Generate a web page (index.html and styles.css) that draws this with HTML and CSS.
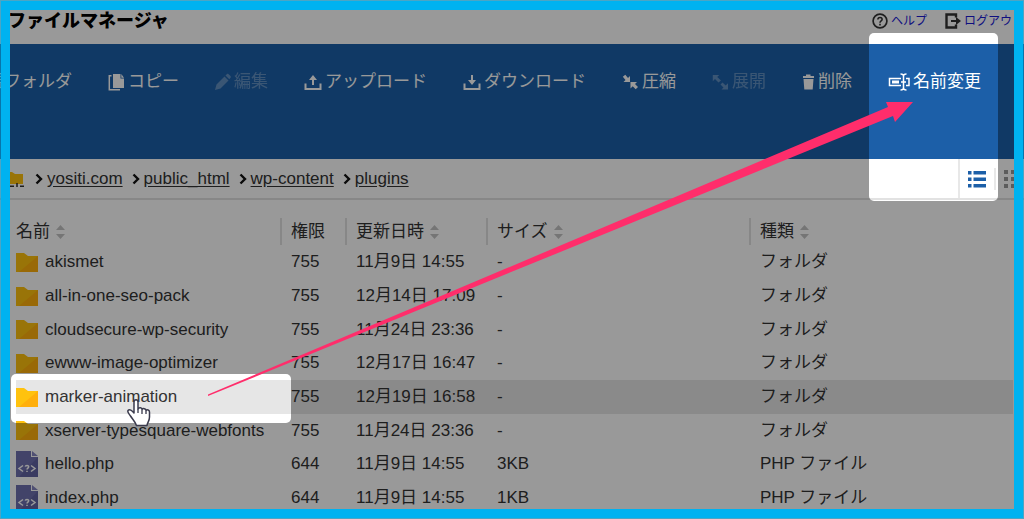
FILE: index.html
```html
<!DOCTYPE html>
<html lang="ja">
<head>
<meta charset="utf-8">
<meta name="viewport" content="width=device-width, initial-scale=1">
<title>ファイルマネージャ</title>
<link rel="stylesheet" href="styles.css">
</head>
<body>
<svg class="defs" width="0" height="0" aria-hidden="true">
  <symbol id="folder" viewBox="0 0 22 19">
    <path fill="#ffc20e" d="M0 0h8l4 3h10v16H0z"/>
    <path fill="#ffaf0c" d="M22 3v16H3z"/>
  </symbol>
  <symbol id="php" viewBox="0 0 22 26">
    <path fill="#6f70b0" d="M0 0h15v6h7v20H0z"/>
    <path fill="#6263a2" d="M22 6v20H3z"/>
    <path fill="#8586c0" d="M16 0l6 5h-6z"/>
    <path fill="none" stroke="#fff" stroke-width="1.500" d="M7 14.500l-4 3 4 3M15 14.500l4 3-4 3M9.300 15.600c.2-1.600 3.500-1.600 3.400.2 0 1.200-1.700 1.300-1.700 2.600M11 19.700v1.300"/>
  </symbol>
  <symbol id="sort" viewBox="0 0 9 14">
    <path fill="#c4c4c4" d="M0 5l4.500-5L9 5zM0 9h9l-4.500 5z"/>
  </symbol>
  <symbol id="chevron" viewBox="0 0 8 12">
    <path fill="none" stroke="#111" stroke-width="2.400" d="M1.500 1.500L6 6l-4.500 4.500"/>
  </symbol>
</svg>

<div class="app">
  <header class="header">
    <h1 class="title">ファイルマネージャ</h1>
    <nav class="account">
      <a href="#help" class="account-link">
        <svg width="16" height="16" viewBox="0 0 16 16"><circle cx="8" cy="8" r="6.900" fill="none" stroke="#333" stroke-width="1.700"/><path d="M5.900 6.500c0-2.800 4.300-2.600 4.200-.1C10.100 7.900 8 7.800 8 9.700M8 10.700v1.700" fill="none" stroke="#333" stroke-width="1.600"/></svg>
        <span>ヘルプ</span>
      </a>
      <a href="#logout" class="account-link">
        <svg width="16" height="16" viewBox="0 0 16 16"><path d="M11 4.500V1.500H1.500v13H11v-3" fill="none" stroke="#333" stroke-width="2.400"/><path d="M6 7h5V4l5 4-5 4V9H6z" fill="#333"/></svg>
        <span>ログアウト</span>
      </a>
    </nav>
  </header>

  <div class="toolbar">
    <button class="tool">新規フォルダ</button>
    <button class="tool">
      <svg width="17" height="18" viewBox="0 0 17 18"><path fill="#fff" d="M5 1h7.500v4.500H16V15H5z"/><path fill="#fff" d="M13.300 1L16 4.700h-2.700z"/><path fill="none" stroke="#fff" stroke-width="1.500" d="M3.500 2.800H1.300v14H12"/></svg>コピー</button>
    <button class="tool" disabled>
      <svg width="16" height="18" viewBox="0 0 16 18"><path fill="#fff" d="M0 17l1.500-5.500L9.500 3.500l4 4-8 8zM10.500 2.500L12 1c.7-.6 1.300-.3 3 1.400.9 1 1.100 1.600.5 2.300l-1.200 1.500z"/></svg>編集</button>
    <button class="tool">
      <svg width="18" height="18" viewBox="0 0 18 18"><path fill="none" stroke="#fff" stroke-width="2" d="M1.500 10.500V16h15v-5.500"/><path fill="#fff" d="M9 2l4 5h-3v5H8V7H5z"/></svg>アップロード</button>
    <button class="tool">
      <svg width="18" height="18" viewBox="0 0 18 18"><path fill="none" stroke="#fff" stroke-width="2" d="M1.500 10.500V16h15v-5.500"/><path fill="#fff" d="M8 2h2v5h3l-4 5-4-5h3z"/></svg>ダウンロード</button>
    <button class="tool">
      <svg width="17" height="18" viewBox="0 0 17 18"><path fill="#fff" d="M8 9H1.500l2-2L.8 3.800l2.500-2L6 5l2-2zM8.500 9H15l-2 2 3 3-2.300 2.200-3-3-2.200 2.200z"/></svg>圧縮</button>
    <button class="tool" disabled>
      <svg width="17" height="18" viewBox="0 0 17 18"><path fill="#fff" d="M.8 2h6.400l-2 2L9 7.500 6.500 9.500 3 6 .8 8.200zM16 16.500H9.500l2-2L8.500 11.500l2-2 3.200 3 2.300-2.200z"/></svg>展開</button>
    <button class="tool">
      <svg width="13" height="18" viewBox="0 0 13 18"><path fill="#fff" d="M1 3h3V1.500h4.500V3H12v2H1zM1.500 6h10l-.8 10.500H2.300z"/></svg>削除</button>
    <button class="tool">
      <svg width="22" height="18" viewBox="0 0 22 18"><path fill="none" stroke="#fff" stroke-width="1.500" d="M13 5.500H1.500v7H13M18 5.500h3v7h-3M12.500 1c2 0 3 .5 3 2v12c0 1.500-1 2-3 2M18.500 1c-2 0-3 .5-3 2v12c0 1.500 1 2 3 2M13 9h5"/><path fill="#fff" d="M4 7.500h7v3H4z"/></svg>名前変更</button>
  </div>

  <div class="pathbar">
    <nav class="crumbs">
      <a href="#root" class="crumb-root" aria-label="ルート"><svg width="20" height="18" viewBox="0 0 20 18"><path fill="#ffc20e" d="M0 2h8l3 2h8v10H0z"/><path d="M0 16.200h10M16 16.200h4M13 13v4" stroke="#333" stroke-width="1.500"/></svg></a>
      <svg class="sep" width="8" height="12"><use href="#chevron"/></svg>
      <a href="#yositi">yositi.com</a>
      <svg class="sep" width="8" height="12"><use href="#chevron"/></svg>
      <a href="#public">public_html</a>
      <svg class="sep" width="8" height="12"><use href="#chevron"/></svg>
      <a href="#wp">wp-content</a>
      <svg class="sep" width="8" height="12"><use href="#chevron"/></svg>
      <a href="#plugins">plugins</a>
    </nav>
    <div class="views">
      <button class="view" aria-label="リスト表示"><svg width="18" height="18" viewBox="0 0 18 18"><path fill="#1c5fa8" d="M0 1h3.500v3.500H0zM5.500 1H18v3.500H5.500zM0 7.500h3.500V11H0zM5.500 7.500H18V11H5.500zM0 14h3.500v3.500H0zM5.500 14H18v3.500H5.500z"/></svg></button>
      <button class="view" aria-label="アイコン表示"><svg width="18" height="18" viewBox="0 0 18 18"><path fill="#999" d="M0 0h4v4H0zM7 0h4v4H7zM14 0h4v4h-4zM0 7h4v4H0zM7 7h4v4H7zM14 7h4v4h-4zM0 14h4v4H0zM7 14h4v4H7zM14 14h4v4h-4z"/></svg></button>
    </div>
  </div>

  <main class="listing">
    <table class="files">
      <colgroup><col class="c-name"><col class="c-perm"><col class="c-date"><col class="c-size"><col></colgroup>
      <thead>
        <tr>
          <th><button class="sort">名前<svg width="9" height="14"><use href="#sort"/></svg></button></th>
          <th><span class="sort">権限</span></th>
          <th><button class="sort">更新日時<svg width="9" height="14"><use href="#sort"/></svg></button></th>
          <th><button class="sort">サイズ<svg width="9" height="14"><use href="#sort"/></svg></button></th>
          <th><button class="sort">種類<svg width="9" height="14"><use href="#sort"/></svg></button></th>
        </tr>
      </thead>
      <tbody>
        <tr><td><span class="file"><svg width="22" height="19"><use href="#folder"/></svg>akismet</span></td><td>755</td><td>11月9日 14:55</td><td>-</td><td>フォルダ</td></tr>
        <tr><td><span class="file"><svg width="22" height="19"><use href="#folder"/></svg>all-in-one-seo-pack</span></td><td>755</td><td>12月14日 17:09</td><td>-</td><td>フォルダ</td></tr>
        <tr><td><span class="file"><svg width="22" height="19"><use href="#folder"/></svg>cloudsecure-wp-security</span></td><td>755</td><td>11月24日 23:36</td><td>-</td><td>フォルダ</td></tr>
        <tr><td><span class="file"><svg width="22" height="19"><use href="#folder"/></svg>ewww-image-optimizer</span></td><td>755</td><td>12月17日 16:47</td><td>-</td><td>フォルダ</td></tr>
        <tr class="current"><td><span class="file"><svg width="22" height="19"><use href="#folder"/></svg>marker-animation</span></td><td>755</td><td>12月19日 16:58</td><td>-</td><td>フォルダ</td></tr>
        <tr><td><span class="file"><svg width="22" height="19"><use href="#folder"/></svg>xserver-typesquare-webfonts</span></td><td>755</td><td>11月24日 23:36</td><td>-</td><td>フォルダ</td></tr>
        <tr><td><span class="file"><svg width="22" height="26"><use href="#php"/></svg>hello.php</span></td><td>644</td><td>11月9日 14:55</td><td>3KB</td><td>PHP ファイル</td></tr>
        <tr><td><span class="file"><svg width="22" height="26"><use href="#php"/></svg>index.php</span></td><td>644</td><td>11月9日 14:55</td><td>1KB</td><td>PHP ファイル</td></tr>
      </tbody>
    </table>
  </main>

  <!-- dimmed layer with two spotlights, pointer and arrow -->
  <svg class="overlay" aria-hidden="true">
    <mask id="spots">
      <rect width="100%" height="100%" fill="#fff"/>
      <rect x="869" y="33" width="129" height="168" rx="5" fill="#000"/>
      <rect x="11" y="374" width="280" height="49" rx="5" fill="#000"/>
    </mask>
    <rect width="100%" height="100%" fill="#000" fill-opacity=".4" mask="url(#spots)"/>
    <path fill="#fff" stroke="#3b3b4d" stroke-width="1.500" stroke-linejoin="round" d="M134 402c0-3 4-3 4 0v7c1-2 4-1.500 4 .5 1-1.500 4-1 4 1 1-1.200 3.500-.6 3.500 1.500v5c0 4-2 5-2.500 8.500h-10.500c-1-3.500-4-6.500-6-9.500-1.500-2.300-3.500-4-2.500-5.500 1.500-2 4 0 6 2.500z"/>
    <path fill="none" stroke="#3b3b4d" stroke-width="1.300" d="M138 409v4M142 410v4M146 411v3"/>
    <path fill="#ff2d6b" d="M208 394.500L888 107l-2-5h27l-18 20-2-6L208 396z"/>
  </svg>
  <div class="frame"></div>
</div>
</body>
</html>
```
FILE: styles.css
```css
* {
  box-sizing: border-box;
}

body {
  margin: 0;
  background: #fff;
  color: #333;
  font: 17px/24px "Liberation Sans", "Noto Sans CJK JP", sans-serif;
}

button {
  padding: 0;
  border: 0;
  background: none;
  color: inherit;
  font: inherit;
}

svg {
  flex: none;
}

.defs {
  position: absolute;
}

.app {
  position: relative;
  height: 100vh;
  overflow: hidden;
}

.header {
  display: flex;
  justify-content: space-between;
  height: 44px;
  padding: 8px 0 0 8px;
}

.title {
  margin: 0;
  color: #000;
  font-size: 18px;
  font-weight: 900;
  line-height: 26px;
}

.account {
  display: flex;
  gap: 18px;
}

.account-link {
  display: flex;
  align-items: center;
  gap: 3px;
  height: 26px;
  color: #1a1ad6;
  font-size: 12px;
  text-decoration: none;
  white-space: nowrap;
}

.toolbar {
  display: flex;
  gap: 36px;
  height: 115px;
  margin-left: -30px;
  padding-top: 25px;
  background: #1c5fa8;
  color: #fff;
}

.tool {
  display: flex;
  align-items: center;
  gap: 3px;
  height: 26px;
  white-space: nowrap;
}

.tool:disabled {
  opacity: 0.3;
}

.pathbar {
  display: flex;
  justify-content: space-between;
  height: 41px;
  border-bottom: 2px solid #e2e2e2;
}

.crumbs {
  display: flex;
  align-items: center;
  padding-left: 4px;
}

.crumbs a {
  color: #333;
  text-underline-offset: 2px;
}

.crumb-root {
  display: flex;
  padding-right: 2px;
}

.sep {
  margin: 0 4px 0 9px;
}

.views {
  display: flex;
  align-items: center;
  border-left: 2px solid #e8e8e8;
}

.view {
  display: flex;
  align-items: center;
  height: 22px;
  padding: 0 8px;
}

.view + .view {
  padding: 0 2px 0 8px;
  border-left: 2px solid #e8e8e8;
}

.listing {
  padding: 0 11px 0 16px;
}

.files {
  width: 100%;
  border-collapse: collapse;
  table-layout: fixed;
}

.c-name {
  width: 264px;
}

.c-perm {
  width: 65px;
}

.c-date {
  width: 141px;
}

.c-size {
  width: 263px;
}

.files th {
  height: 45px;
  padding: 18px 0 0;
  font-weight: 400;
  text-align: left;
}

.sort {
  display: flex;
  align-items: center;
  gap: 6px;
  height: 27px;
  padding-top: 1px;
}

.files th + th .sort {
  padding-left: 9px;
  border-left: 2px solid #e2e2e2;
}

.files td {
  height: 34px;
  padding: 0 0 0 11px;
  white-space: nowrap;
}

.files tr:nth-child(3n) td {
  height: 33px;
}

.files td:first-child {
  padding: 0;
}

.file {
  display: flex;
  align-items: center;
  gap: 7px;
}

.current {
  background: #e6e6e6;
}

.overlay {
  position: absolute;
  inset: 0;
  width: 100%;
  height: 100%;
  pointer-events: none;
}

.frame {
  position: absolute;
  inset: 1px;
  border: 9px solid #00b2f0;
  box-shadow: 0 0 0 1px rgba(0, 178, 240, 0.5);
  pointer-events: none;
}
```
